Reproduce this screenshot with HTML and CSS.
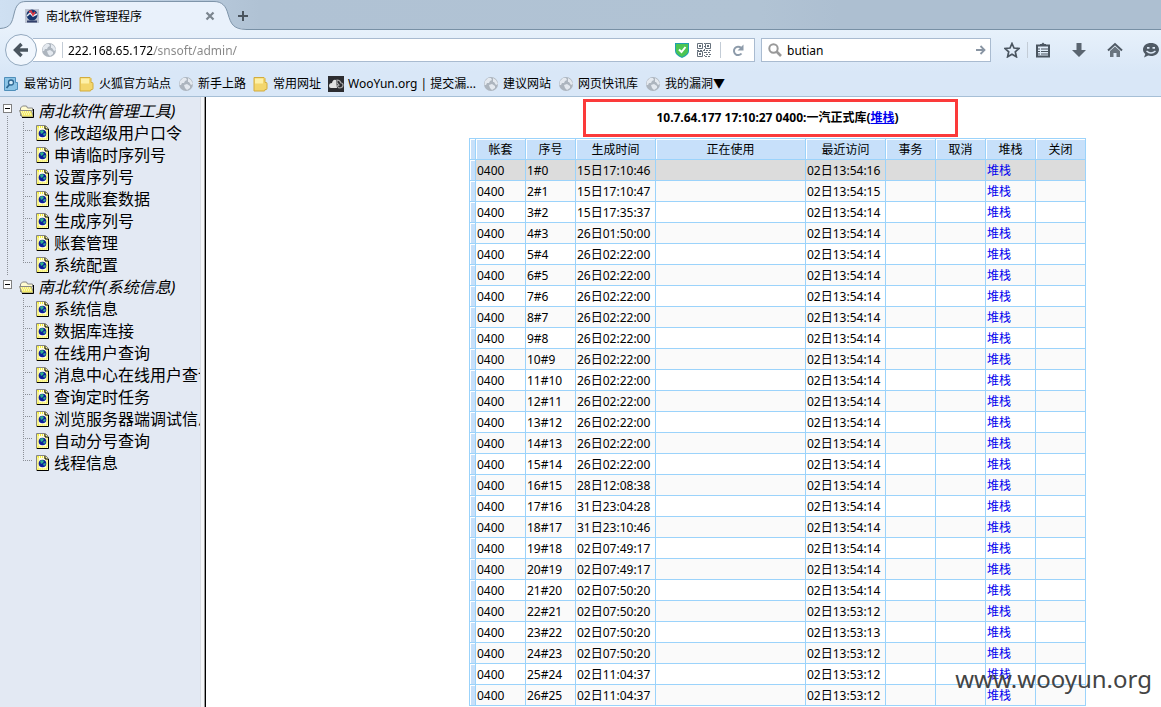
FILE: index.html
```html
<!DOCTYPE html>
<html lang="zh-CN">
<head>
<meta charset="utf-8">
<title>南北软件管理程序</title>
<link rel="stylesheet" href="styles.css">
</head>
<body>
<svg class="defs" aria-hidden="true">
  <symbol id="globe" viewBox="0 0 16 16"><circle cx="8" cy="8" r="7" fill="#adb5be"/><path d="M2 5 5 2 8 2 9 4 7 5 6 7 4 7 3 9 1.500 9zM10 2l3 2 2 4-2 1-2-3-1 0zM6 9l3-1 3 2 0 2-3 2-2-2z" fill="#e4e9ef"/></symbol>
  <symbol id="folder" viewBox="0 0 16 16"><path d="M1 1.500h10l1 1v4h1q1 0 1 1v5q0 1-1 1h-1v1l-1 .5H1z" fill="#f3d66d" stroke="#d3ac3d"/><path d="M2 2.500h8v5H2z" fill="#fdf0a8"/></symbol>
  <symbol id="page" viewBox="0 0 13 16"><path d="M.5 .5h9l3 3v12H.5z" fill="#fffde0" stroke="#858585"/><path d="M2 2h7l2 3v9H2z" fill="none" stroke="#f4ee3c" stroke-width="2" stroke-dasharray="1 1"/><path d="M12.500 4v11.500H1M9 1v3h3" fill="none" stroke="#000"/><circle cx="6.500" cy="8.500" r="3.800" fill="#0c1c9c"/><path d="M4 6l2-1 2 1-1 2-2 1zM7 9l2-1 1 1-2 2z" fill="#2fae8d"/></symbol>
  <symbol id="open" viewBox="0 0 16 13"><path d="M1.500 11V3l2-2h4l1 2h5v3" fill="#fffbd0" stroke="#888"/><path d="M.5 5.500h12l2 6.500H3z" fill="#f3eb68" stroke="#888"/><path d="M14.500 4v8.500H3" fill="none" stroke="#000"/><path d="M2 7h10M3 9h10" stroke="#fff" stroke-dasharray="1 1"/></symbol>
</svg>
<header class="chrome">
  <div class="tabs">
    <div class="tab">
      <svg class="tab-shape" viewBox="0 0 246 30" aria-hidden="true"><path d="M0 30V28.500C11 28 12 22 14 14 16 5 19 1.500 26 1.500H214C222 1.500 226 6 228 14 231 24 233 29 246 29V30z" fill="#e9f1fb"/><path d="M0 28.500C11 28 12 22 14 14 16 5 19 1.500 26 1.500H214C222 1.500 226 6 228 14 231 24 233 29 246 29.500" fill="none" stroke="#7f95aa"/></svg>
      <svg class="favicon" viewBox="0 0 14 14" aria-hidden="true"><path d="M0 0h14v14H0z" fill="#bcc2d0"/><circle cx="7" cy="6" r="5.500" fill="#17366f"/><path d="M2 7 5 4 8 7 12 5" fill="none" stroke="#e9edf5" stroke-width="1.500"/><path d="M4 3 6 2 8 6 10 3" fill="none" stroke="#e33a45" stroke-width="1.600"/><path d="M2 12.500h10" stroke="#33406b" stroke-width="2"/></svg>
      <span class="tab-title">南北软件管理程序</span>
      <button class="plain" aria-label="关闭标签页"><svg width="10" height="10" viewBox="0 0 10 10"><path d="M1.500 1.500l7 7M8.500 1.500l-7 7" stroke="#7b858e" stroke-width="2.200"/></svg></button>
    </div>
    <button class="plain new-tab" aria-label="新标签页"><svg width="12" height="12" viewBox="0 0 12 12"><path d="M6 1v10M1 6h10" stroke="#4a545e" stroke-width="2"/></svg></button>
  </div>
  <div class="nav">
    <button class="back" aria-label="后退"><svg width="16" height="16" viewBox="0 0 16 16"><path d="M8.500 2 2.500 8l6 6M3 8h12" fill="none" stroke="#4a555f" stroke-width="3.400"/></svg></button>
    <div class="address">
      <svg class="icon16"><use href="#globe"/></svg>
      <i class="rule"></i>
      <input class="url" type="text" aria-label="地址" value="222.168.65.172/snsoft/admin/">
      <svg width="14" height="15" viewBox="0 0 14 15" aria-hidden="true"><path d="M0 0h14v8q0 4-7 7Q0 12 0 8z" fill="#1fa0b0"/><path d="M1 1h12v7q0 3-6 6Q1 11 1 8z" fill="#4cc552"/><path d="M4 6.500l2.500 2.500L10.500 4" fill="none" stroke="#fff" stroke-width="2"/></svg>
      <svg class="qr" width="14" height="14" viewBox="0 0 14 14" aria-hidden="true" fill="none" stroke="#66717c"><path d="M.5 .5h5v5h-5zM8.500 .5h5v5h-5zM.5 8.500h5v5h-5z"/><path d="M2 3h2M10 3h2M2 11h2" stroke-width="2"/><path d="M7.500 0v14" stroke-dasharray="1 2"/><path d="M0 7.500h14M8 9.500h6M9 11.500h5M8 13.500h6" stroke-dasharray="2 1"/></svg>
      <i class="rule"></i>
      <button class="plain reload" aria-label="刷新"><svg width="12" height="13" viewBox="0 0 12 13"><path d="M9 3.800A4.200 4.200 0 1 0 9.500 9.500" fill="none" stroke="#8d9baa" stroke-width="2"/><path d="M11.500 .5v6h-6z" fill="#8d9baa"/></svg></button>
    </div>
    <div class="search">
      <svg width="14" height="14" viewBox="0 0 14 14" aria-hidden="true"><circle cx="5.500" cy="5.500" r="4.200" fill="none" stroke="#999" stroke-width="2"/><path d="M8.500 8.500l4.500 4.500" stroke="#999" stroke-width="2.600"/></svg>
      <input type="text" aria-label="搜索" value="butian">
      <button class="plain" aria-label="开始搜索"><svg width="10" height="10" viewBox="0 0 10 10"><path d="M0 5h8M4.500 1 8.500 5l-4 4" fill="none" stroke="#8995a3" stroke-width="1.800"/></svg></button>
    </div>
    <div class="tools">
      <button class="plain" aria-label="收藏"><svg class="icon16" viewBox="0 0 16 16"><path d="M8 1.500l2 4.500 5 .5-3.700 3.300 1.100 5L8 12.300l-4.400 2.500 1.100-5L1 6.500l5-.5z" fill="none" stroke="#4a5560" stroke-width="1.700"/></svg></button>
      <i class="rule"></i>
      <button class="plain" aria-label="书签"><svg class="icon16" viewBox="0 0 16 16"><path d="M2 3.500h12v11H2z" fill="none" stroke="#4a5560" stroke-width="2"/><path d="M5 3.500V2h1.500L8 .5 9.500 2H11v1.500z" fill="#4a5560"/><path d="M3 7h2M6 7h7M3 9.500h2M6 9.500h7M3 12h2M6 12h7" stroke="#4a5560" stroke-width="1.200"/></svg></button>
      <button class="plain" aria-label="下载"><svg class="icon16" viewBox="0 0 16 16"><path d="M5.500 1h5v7H15l-7 7-7-7h4.500z" fill="#5a6570"/></svg></button>
      <button class="plain" aria-label="主页"><svg class="icon16" viewBox="0 0 16 16"><path d="M1 8.500 8 2l7 6.500" fill="none" stroke="#4f5a65" stroke-width="2"/><path d="M3 9l5-4.500L13 9v6H9.500v-4h-3v4H3z" fill="#6a757f"/></svg></button>
      <button class="plain" aria-label="聊天"><svg class="icon16" viewBox="0 0 16 16"><path d="M8 1c4.500 0 8 2.700 8 6.500S12.500 14 8 14c-1 0-2 0-2.800-.4L1 15.500l1.300-3.500C.8 10.800 0 9.300 0 7.500 0 3.700 3.500 1 8 1z" fill="#4f5a65"/><path d="M4 5.800h2.500M9.500 5.800H12" stroke="#dbe7f5" stroke-width="1.800"/><path d="M3.500 9q4.500 4 9 0" fill="none" stroke="#dbe7f5" stroke-width="1.500"/></svg></button>
    </div>
  </div>
  <nav class="bookmarks">
    <a href="#"><svg class="icon16" viewBox="0 0 16 16"><path d="M.5 1.500h11v5h2v7h-2v1H.5z" fill="#8cc4e6" stroke="#4f8fba"/><circle cx="7" cy="6.500" r="2.500" fill="#d5ecfa" stroke="#2d6792" stroke-width="1.300"/><path d="M5.500 8.500 2.500 12" stroke="#2d6792" stroke-width="1.800"/></svg>最常访问</a>
    <a href="#"><svg class="icon16"><use href="#folder"/></svg>火狐官方站点</a>
    <a href="#"><svg class="icon16"><use href="#globe"/></svg>新手上路</a>
    <a href="#"><svg class="icon16"><use href="#folder"/></svg>常用网址</a>
    <a href="#"><svg class="icon16" viewBox="0 0 16 16"><path d="M0 0h16v16H0z" fill="#2c2c30"/><path d="M1 10q0-3 3-3 1-4 4-3l1 8H3q-2 0-2-2z" fill="#e2e2e2"/><path d="M9 4q3 0 4 3 2 0 2 2 0 3-4 3l-2-2 2-1-2-2z" fill="none" stroke="#aaa" stroke-width="1.200"/></svg>WooYun.org | 提交漏...</a>
    <a href="#"><svg class="icon16"><use href="#globe"/></svg>建议网站</a>
    <a href="#"><svg class="icon16"><use href="#globe"/></svg>网页快讯库</a>
    <a href="#"><svg class="icon16"><use href="#globe"/></svg>我的漏洞▼</a>
  </nav>
</header>
<div class="frames">
  <nav class="sidebar">
    <section class="group first">
      <div class="group-head"><button class="toggle" aria-label="折叠"></button><svg width="16" height="13"><use href="#open"/></svg><em>南北软件(管理工具)</em></div>
      <ul>
        <li><i class="branch"></i><svg width="13" height="16"><use href="#page"/></svg><a href="#">修改超级用户口令</a></li>
        <li><i class="branch"></i><svg width="13" height="16"><use href="#page"/></svg><a href="#">申请临时序列号</a></li>
        <li><i class="branch"></i><svg width="13" height="16"><use href="#page"/></svg><a href="#">设置序列号</a></li>
        <li><i class="branch"></i><svg width="13" height="16"><use href="#page"/></svg><a href="#">生成账套数据</a></li>
        <li><i class="branch"></i><svg width="13" height="16"><use href="#page"/></svg><a href="#">生成序列号</a></li>
        <li><i class="branch"></i><svg width="13" height="16"><use href="#page"/></svg><a href="#">账套管理</a></li>
        <li><i class="branch"></i><svg width="13" height="16"><use href="#page"/></svg><a href="#">系统配置</a></li>
      </ul>
    </section>
    <section class="group">
      <div class="group-head"><button class="toggle" aria-label="折叠"></button><svg width="16" height="13"><use href="#open"/></svg><em>南北软件(系统信息)</em></div>
      <ul>
        <li><i class="branch"></i><svg width="13" height="16"><use href="#page"/></svg><a href="#">系统信息</a></li>
        <li><i class="branch"></i><svg width="13" height="16"><use href="#page"/></svg><a href="#">数据库连接</a></li>
        <li><i class="branch"></i><svg width="13" height="16"><use href="#page"/></svg><a href="#">在线用户查询</a></li>
        <li><i class="branch"></i><svg width="13" height="16"><use href="#page"/></svg><a href="#">消息中心在线用户查询</a></li>
        <li><i class="branch"></i><svg width="13" height="16"><use href="#page"/></svg><a href="#">查询定时任务</a></li>
        <li><i class="branch"></i><svg width="13" height="16"><use href="#page"/></svg><a href="#">浏览服务器端调试信息</a></li>
        <li><i class="branch"></i><svg width="13" height="16"><use href="#page"/></svg><a href="#">自动分号查询</a></li>
        <li><i class="branch"></i><svg width="13" height="16"><use href="#page"/></svg><a href="#">线程信息</a></li>
      </ul>
    </section>
  </nav>
  <div class="splitter"></div>
  <main class="content">
    <div class="highlight"></div>
    <h1>10.7.64.177 17:10:27 0400:一汽正式库(<a href="#">堆栈</a>)</h1>
    <table>
      <colgroup><col class="mark"><col class="short"><col class="short"><col class="time"><col class="wide"><col class="time"><col class="short"><col class="short"><col class="short"><col class="short"></colgroup>
      <thead><tr><th></th><th>帐套</th><th>序号</th><th>生成时间</th><th>正在使用</th><th>最近访问</th><th>事务</th><th>取消</th><th>堆栈</th><th>关闭</th></tr></thead>
      <tbody>
        <tr class="selected"><td></td><td>0400</td><td>1#0</td><td>15日17:10:46</td><td></td><td>02日13:54:16</td><td></td><td></td><td><a href="#">堆栈</a></td><td></td></tr>
        <tr><td></td><td>0400</td><td>2#1</td><td>15日17:10:47</td><td></td><td>02日13:54:15</td><td></td><td></td><td><a href="#">堆栈</a></td><td></td></tr>
        <tr><td></td><td>0400</td><td>3#2</td><td>15日17:35:37</td><td></td><td>02日13:54:14</td><td></td><td></td><td><a href="#">堆栈</a></td><td></td></tr>
        <tr><td></td><td>0400</td><td>4#3</td><td>26日01:50:00</td><td></td><td>02日13:54:14</td><td></td><td></td><td><a href="#">堆栈</a></td><td></td></tr>
        <tr><td></td><td>0400</td><td>5#4</td><td>26日02:22:00</td><td></td><td>02日13:54:14</td><td></td><td></td><td><a href="#">堆栈</a></td><td></td></tr>
        <tr><td></td><td>0400</td><td>6#5</td><td>26日02:22:00</td><td></td><td>02日13:54:14</td><td></td><td></td><td><a href="#">堆栈</a></td><td></td></tr>
        <tr><td></td><td>0400</td><td>7#6</td><td>26日02:22:00</td><td></td><td>02日13:54:14</td><td></td><td></td><td><a href="#">堆栈</a></td><td></td></tr>
        <tr><td></td><td>0400</td><td>8#7</td><td>26日02:22:00</td><td></td><td>02日13:54:14</td><td></td><td></td><td><a href="#">堆栈</a></td><td></td></tr>
        <tr><td></td><td>0400</td><td>9#8</td><td>26日02:22:00</td><td></td><td>02日13:54:14</td><td></td><td></td><td><a href="#">堆栈</a></td><td></td></tr>
        <tr><td></td><td>0400</td><td>10#9</td><td>26日02:22:00</td><td></td><td>02日13:54:14</td><td></td><td></td><td><a href="#">堆栈</a></td><td></td></tr>
        <tr><td></td><td>0400</td><td>11#10</td><td>26日02:22:00</td><td></td><td>02日13:54:14</td><td></td><td></td><td><a href="#">堆栈</a></td><td></td></tr>
        <tr><td></td><td>0400</td><td>12#11</td><td>26日02:22:00</td><td></td><td>02日13:54:14</td><td></td><td></td><td><a href="#">堆栈</a></td><td></td></tr>
        <tr><td></td><td>0400</td><td>13#12</td><td>26日02:22:00</td><td></td><td>02日13:54:14</td><td></td><td></td><td><a href="#">堆栈</a></td><td></td></tr>
        <tr><td></td><td>0400</td><td>14#13</td><td>26日02:22:00</td><td></td><td>02日13:54:14</td><td></td><td></td><td><a href="#">堆栈</a></td><td></td></tr>
        <tr><td></td><td>0400</td><td>15#14</td><td>26日02:22:00</td><td></td><td>02日13:54:14</td><td></td><td></td><td><a href="#">堆栈</a></td><td></td></tr>
        <tr><td></td><td>0400</td><td>16#15</td><td>28日12:08:38</td><td></td><td>02日13:54:14</td><td></td><td></td><td><a href="#">堆栈</a></td><td></td></tr>
        <tr><td></td><td>0400</td><td>17#16</td><td>31日23:04:28</td><td></td><td>02日13:54:14</td><td></td><td></td><td><a href="#">堆栈</a></td><td></td></tr>
        <tr><td></td><td>0400</td><td>18#17</td><td>31日23:10:46</td><td></td><td>02日13:54:14</td><td></td><td></td><td><a href="#">堆栈</a></td><td></td></tr>
        <tr><td></td><td>0400</td><td>19#18</td><td>02日07:49:17</td><td></td><td>02日13:54:14</td><td></td><td></td><td><a href="#">堆栈</a></td><td></td></tr>
        <tr><td></td><td>0400</td><td>20#19</td><td>02日07:49:17</td><td></td><td>02日13:54:14</td><td></td><td></td><td><a href="#">堆栈</a></td><td></td></tr>
        <tr><td></td><td>0400</td><td>21#20</td><td>02日07:50:20</td><td></td><td>02日13:54:14</td><td></td><td></td><td><a href="#">堆栈</a></td><td></td></tr>
        <tr><td></td><td>0400</td><td>22#21</td><td>02日07:50:20</td><td></td><td>02日13:53:12</td><td></td><td></td><td><a href="#">堆栈</a></td><td></td></tr>
        <tr><td></td><td>0400</td><td>23#22</td><td>02日07:50:20</td><td></td><td>02日13:53:13</td><td></td><td></td><td><a href="#">堆栈</a></td><td></td></tr>
        <tr><td></td><td>0400</td><td>24#23</td><td>02日07:50:20</td><td></td><td>02日13:53:12</td><td></td><td></td><td><a href="#">堆栈</a></td><td></td></tr>
        <tr><td></td><td>0400</td><td>25#24</td><td>02日11:04:37</td><td></td><td>02日13:53:12</td><td></td><td></td><td><a href="#">堆栈</a></td><td></td></tr>
        <tr><td></td><td>0400</td><td>26#25</td><td>02日11:04:37</td><td></td><td>02日13:53:12</td><td></td><td></td><td><a href="#">堆栈</a></td><td></td></tr>
      </tbody>
    </table>
    <div class="watermark">www.wooyun.org</div>
  </main>
</div>
</body>
</html>
```
FILE: styles.css
```css
* { box-sizing: border-box; }
body {
  margin: 0;
  height: 100vh;
  display: flex;
  flex-direction: column;
  overflow: hidden;
  font: 12px/16px "Noto Sans", "Noto Sans CJK SC", sans-serif;
  color: #000;
  background: #fff;
}
a { color: inherit; text-decoration: none; }
svg { display: block; flex: none; }
input {
  flex: 1;
  min-width: 0;
  padding: 2px 0 0;
  border: 0;
  outline: 0;
  background: none;
  font: inherit;
  color: #000;
}
.defs { display: none; }
.plain { display: flex; padding: 0; border: 0; background: none; }
.icon16 { width: 16px; height: 16px; }
.rule { width: 1px; height: 16px; background: #c3ccd6; }

.chrome {
  flex: none;
  border-bottom: 1px solid #a6bfd6;
  background: linear-gradient(#e7f1fb 30px, #d9e7f7 72px);
}
.tabs {
  display: flex;
  height: 30px;
  border-bottom: 1px solid #7890a5;
  background: linear-gradient(90deg, #cfe0f2, #b0c2d4 260px, #b1c3d4 760px, #adbfd1 840px);
}
.tab {
  position: relative;
  display: flex;
  align-items: center;
  width: 237px;
  height: 30px;
  padding: 2px 22px 0 25px;
}
.tab-shape { position: absolute; left: 0; top: 0; width: 246px; height: 30px; }
.favicon { position: relative; width: 14px; height: 14px; }
.tab-title { position: relative; flex: 1; padding: 2px 0 0 7px; }
.tab .plain { position: relative; }
.new-tab { align-items: center; padding: 2px 0 0; }

.nav { display: flex; align-items: center; height: 40px; padding-left: 5px; }
.back {
  position: relative;
  display: flex;
  align-items: center;
  justify-content: center;
  width: 32px;
  height: 32px;
  padding: 0;
  border: 1px solid #93a9bf;
  border-radius: 50%;
  background: #f0f6fd;
}
.address, .search {
  display: flex;
  align-items: center;
  height: 24px;
  border: 1px solid #a9bbd0;
  background: #fff;
}
.address { flex: 1; gap: 5px; margin-left: -4px; padding-left: 8px; border-left: 0; }
.qr { margin: 0 4px 0 3px; }
.url {
  background: linear-gradient(90deg, #000 86px, #868686 86px);
  -webkit-background-clip: text;
  background-clip: text;
  color: transparent;
}
.reload { padding: 0 10px 0 6px; }
.search { flex: 0 1 230px; gap: 5px; margin-left: 6px; padding: 0 4px 0 6px; }
.tools { display: flex; align-items: center; gap: 20px; width: 170px; padding-left: 13px; }
.tools .rule { margin: 0 -13px; }

.bookmarks { display: flex; align-items: center; gap: 7px; height: 26px; padding: 2px 0 0 4px; white-space: nowrap; }
.bookmarks a { display: flex; align-items: center; gap: 4px; }

.frames { flex: 1; display: flex; min-height: 0; }
.sidebar {
  flex: none;
  width: 200px;
  padding-top: 3px;
  overflow: hidden;
  background: #e3e9f3;
  font-size: 16px;
  line-height: 22px;
  white-space: nowrap;
}
.group-head { display: flex; align-items: center; gap: 3px; height: 22px; padding-left: 3px; }
.toggle {
  width: 9px;
  height: 9px;
  margin: 0 4px 5px 0;
  padding: 0;
  border: 1px solid #808080;
  background: linear-gradient(#000, #000) center / 5px 1px no-repeat #fff;
}
.group ul { margin: 0; padding: 0; list-style: none; }
.group li { display: flex; align-items: center; height: 22px; padding-left: 23px; }
.group li a { margin-left: 5px; }
.first { background: repeating-linear-gradient(#8b8f96 0 1px, transparent 1px 2px) 7px 16px / 1px 100% no-repeat; }
.branch {
  flex: none;
  align-self: stretch;
  width: 9px;
  margin-right: 4px;
  background:
    repeating-linear-gradient(#8b8f96 0 1px, transparent 1px 2px) 0 0 / 1px 100% no-repeat,
    repeating-linear-gradient(90deg, #8b8f96 0 1px, transparent 1px 2px) 0 8px / 9px 1px no-repeat;
}
li:last-child .branch { background-size: 1px 9px, 9px 1px; }
.splitter {
  flex: none;
  width: 6px;
  border-left: 1px solid #d8dde5;
  border-right: 1px solid #000;
  background: linear-gradient(90deg, #f4f6f9 3px, #9a9a9a 3px);
}

.content {
  position: relative;
  flex: 1;
  display: flex;
  flex-direction: column;
  align-items: center;
  min-width: 0;
  padding-left: 188px;
  overflow: hidden;
}
h1 { margin: 0; padding: 13px 0 12px; font-size: 12px; line-height: 16px; white-space: nowrap; }
h1 a { color: #00e; text-decoration: underline; }
.highlight { position: absolute; left: 377px; top: 2px; width: 375px; height: 38px; border: 3px solid #fb3a3a; }
table { flex: none; width: 617px; border-collapse: collapse; table-layout: fixed; }
.mark { width: 6px; }
.short { width: 50px; }
.time { width: 80px; }
.wide { width: 150px; }
th, td { height: 21px; padding: 2px 1px 0; border: 1px solid #9bd3fb; line-height: 16px; white-space: nowrap; }
th { background: #c7e0fa; box-shadow: inset 1px 1px #fff; font-weight: normal; }
td { text-align: left; }
td a { color: #00e; }
tbody tr:nth-child(even) { background: #fafafa; }
tbody .selected { background: #dcdcdc; }
td:first-child { background: #c7e0fa; box-shadow: inset 1px 1px #fff; }
.watermark { position: absolute; right: 9px; bottom: 12px; font-size: 24px; line-height: 32px; color: #444; }
```
